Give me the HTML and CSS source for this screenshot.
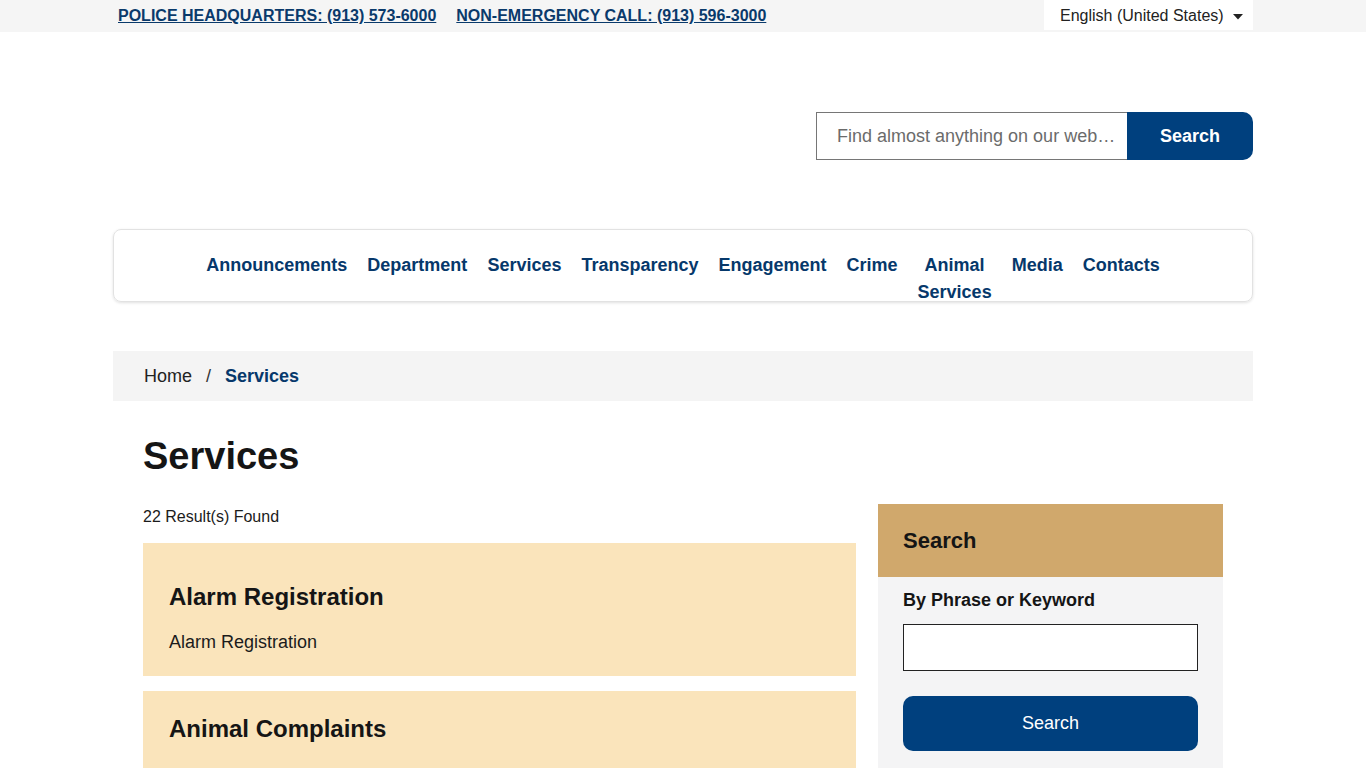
FILE: index.html
```html
<!DOCTYPE html>
<html lang="en">
<head>
<meta charset="utf-8">
<title>Services</title>
<link rel="stylesheet" href="styles.css">
</head>
<body>
<div class="topbar">
  <div class="container topbar-inner">
    <div class="phones">
      <a href="#" class="phone">POLICE HEADQUARTERS: (913) 573-6000</a>
      <a href="#" class="phone">NON-EMERGENCY CALL: (913) 596-3000</a>
    </div>
    <div class="lang">
      <span>English (United States)</span>
      <svg class="caret" width="10" height="6" viewBox="0 0 10 6"><path d="M0 0h10L5 5.5z" fill="#222"/></svg>
    </div>
  </div>
</div>

<header class="container header">
  <form class="site-search">
    <input type="text" class="site-search-input" placeholder="Find almost anything on our web…">
    <button type="button" class="site-search-btn">Search</button>
  </form>
  <nav class="mainnav">
    <a href="#" class="nav-item">Announcements</a>
    <a href="#" class="nav-item">Department</a>
    <a href="#" class="nav-item">Services</a>
    <a href="#" class="nav-item">Transparency</a>
    <a href="#" class="nav-item">Engagement</a>
    <a href="#" class="nav-item">Crime</a>
    <a href="#" class="nav-item nav-wrap">Animal Services</a>
    <a href="#" class="nav-item">Media</a>
    <a href="#" class="nav-item">Contacts</a>
  </nav>
</header>

<div class="container">
  <div class="breadcrumb">
    <a href="#" class="crumb">Home</a>
    <span class="sep">/</span>
    <span class="crumb-current">Services</span>
  </div>
  <main class="content">
    <h1 class="page-title">Services</h1>
    <div class="layout">
      <section class="results">
        <p class="count">22 Result(s) Found</p>
        <article class="card card-first">
          <h2 class="card-title">Alarm Registration</h2>
          <p class="card-text">Alarm Registration</p>
        </article>
        <article class="card">
          <h2 class="card-title">Animal Complaints</h2>
          <p class="card-text">Animal Complaints</p>
        </article>
      </section>
      <aside class="sidebar">
        <div class="side-head">Search</div>
        <div class="side-body">
          <label class="side-label">By Phrase or Keyword</label>
          <input type="text" class="side-input">
          <button type="button" class="side-btn">Search</button>
        </div>
      </aside>
    </div>
  </main>
</div>
</body>
</html>
```

FILE: styles.css
```css
* { box-sizing: border-box; }
body {
  margin: 0;
  font-family: "Liberation Sans", Arial, sans-serif;
  color: #1b1b1b;
  background: #fff;
}
.container {
  width: 1140px;
  margin: 0 auto;
}
.topbar {
  background: #f5f5f5;
  height: 32px;
}
.topbar-inner {
  display: flex;
  justify-content: space-between;
  align-items: flex-start;
  height: 32px;
}
.phones {
  display: flex;
  gap: 20px;
  padding-left: 5px;
  padding-top: 6px;
}
.phone {
  color: #0a3a6b;
  font-weight: bold;
  font-size: 16px;
  text-decoration: underline;
  line-height: 20px;
}
.lang {
  background: #fff;
  height: 30px;
  width: 209px;
  display: flex;
  align-items: center;
  justify-content: space-between;
  padding: 2px 10px 0 16px;
  font-size: 16px;
  color: #222;
}
.caret { margin-top: 1px; }

.header { padding-top: 80px; }
.site-search {
  display: flex;
  justify-content: flex-end;
  margin: 0;
}
.site-search-input {
  width: 311px;
  height: 48px;
  border: 1px solid #767676;
  border-right: none;
  padding: 0 12px 0 20px;
  font-family: inherit;
  font-size: 18px;
  color: #333;
  outline: none;
}
.site-search-input::placeholder { color: #6b6b6b; }
.site-search-btn {
  width: 126px;
  height: 48px;
  border: none;
  border-radius: 0 10px 10px 0;
  background: #00407e;
  color: #fff;
  font-family: inherit;
  font-weight: bold;
  font-size: 18px;
}
.mainnav {
  margin-top: 69px;
  height: 73px;
  border: 1px solid #e2e2e2;
  border-radius: 8px;
  box-shadow: 0 1px 3px rgba(0,0,0,0.12);
  display: flex;
  justify-content: center;
  align-items: flex-start;
  gap: 20px;
  padding-top: 22px;
}
.nav-item {
  color: #06386b;
  font-weight: bold;
  font-size: 18px;
  line-height: 27px;
  text-decoration: none;
  text-align: center;
}
.nav-wrap { width: min-content; }

.breadcrumb {
  margin-top: 49px;
  background: #f4f4f4;
  height: 50px;
  display: flex;
  align-items: center;
  padding-left: 31px;
  font-size: 18px;
}
.crumb { color: #222; text-decoration: none; }
.sep { color: #333; margin: 0 14px; }
.crumb-current { color: #06386b; font-weight: bold; }

.content { padding: 0 30px; }
.page-title {
  margin: 32px 0 25px;
  font-size: 38px;
  line-height: 46px;
  color: #151515;
}
.layout {
  display: grid;
  grid-template-columns: 713px 345px;
  gap: 22px;
  align-items: start;
}
.count {
  margin: 1px 0 14px;
  font-size: 16px;
  line-height: 24px;
  color: #1b1b1b;
}
.card {
  background: #fae4bb;
  padding: 23px 25px 21px 26px;
  margin-bottom: 15px;
}
.card-first { padding-top: 39px; padding-bottom: 20px; }
.card-title {
  margin: 0 0 24px;
  font-size: 24px;
  line-height: 29px;
  color: #151515;
}
.card-first .card-title { margin-bottom: 18px; }
.card-text {
  margin: 0;
  font-size: 18px;
  line-height: 27px;
  color: #1b1b1b;
}
.sidebar { background: #f4f4f5; }
.side-head {
  background: #d0a86c;
  height: 73px;
  padding: 24px 25px 0;
  font-size: 22px;
  line-height: 26px;
  font-weight: bold;
  color: #151515;
}
.side-body {
  padding: 10px 25px 20px;
  display: flex;
  flex-direction: column;
}
.side-label {
  font-weight: bold;
  font-size: 18px;
  line-height: 27px;
  color: #151515;
}
.side-input {
  margin-top: 10px;
  height: 47px;
  border: 1px solid #222;
  background: #fff;
}
.side-btn {
  margin-top: 25px;
  height: 55px;
  border: none;
  border-radius: 10px;
  background: #00407e;
  color: #fff;
  font-family: inherit;
  font-size: 18px;
}
```
